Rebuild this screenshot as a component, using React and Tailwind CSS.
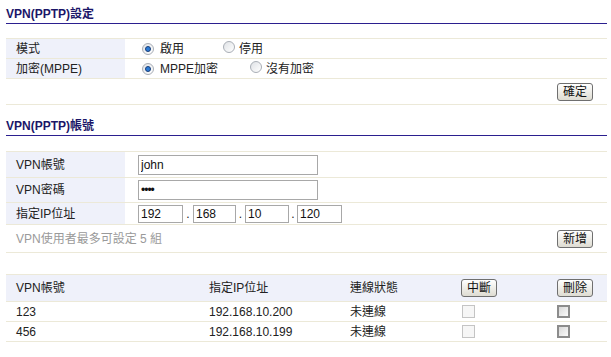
import React from "react";

// VPN (PPTP) settings page

const Title = ({ children, className = "" }) => (
  <div
    className={`pb-[1px] leading-[16px] text-[12px] font-bold text-[#1b1668] border-b border-[#2b1f8f] ${className}`}
  >
    {children}
  </div>
);

const Radio = ({ checked }) => (
  <span className="inline-flex items-center justify-center w-[12px] h-[12px] rounded-full border border-[#a9aeb6] bg-gradient-to-br from-[#dfe2e6] to-[#ffffff]">
    {checked && (
      <span className="w-[6px] h-[6px] rounded-full bg-[#2b7bd6] border border-[#1b3f78]" />
    )}
  </span>
);

const Btn = ({ children }) => (
  <button className="h-[18px] w-[36px] rounded-[3px] border border-[#6f6f6f] bg-gradient-to-b from-[#ffffff] to-[#dedcd2] text-[12px] leading-[14px] text-[#111]">
    {children}
  </button>
);

const Box = ({ disabled }) =>
  disabled ? (
    <span className="block w-[13px] h-[13px] border border-[#c4c4c4] bg-[#f6f6f6]" />
  ) : (
    <span className="block w-[13px] h-[13px] border-2 border-[#8c8c8c] bg-gradient-to-br from-[#d8d8d8] to-[#fbfbfb]" />
  );

const Label = ({ children }) => (
  <div className="w-[119px] self-stretch bg-[#eff1fa] pl-[10px] flex items-center">
    {children}
  </div>
);

const Field = ({ value, className = "" }) => (
  <input
    readOnly
    value={value}
    className={`border border-[#a8a8a8] bg-white px-[2px] text-[12px] text-[#111] outline-none ${className}`}
  />
);

const accounts = [
  { name: "123", ip: "192.168.10.200", status: "未連線" },
  { name: "456", ip: "192.168.10.199", status: "未連線" },
];

export default function App() {
  return (
    <div
      className="w-[611px] h-[357px] bg-white pl-[6px] pr-[4px] text-[12px] text-[#222]"
      style={{ fontFamily: '"Liberation Sans", "Noto Sans CJK TC", sans-serif' }}
    >
      {/* 設定 */}
      <Title className="pt-[6px]">VPN(PPTP)設定</Title>

      <div className="mt-[14px] border-t border-[#ece9d8]">
        <div className="flex items-center h-[20px] border-b border-[#ece9d8]">
          <Label>模式</Label>
          <div className="flex items-center pl-[17px]">
            <Radio checked />
            <span className="ml-[6px]">啟用</span>
            <span className="ml-[39px]"><Radio /></span>
            <span className="ml-[4px]">停用</span>
          </div>
        </div>
        <div className="flex items-center h-[20px] border-b border-[#ece9d8]">
          <Label>加密(MPPE)</Label>
          <div className="flex items-center pl-[17px]">
            <Radio checked />
            <span className="ml-[6px]">MPPE加密</span>
            <span className="ml-[32px]"><Radio /></span>
            <span className="ml-[4px]">沒有加密</span>
          </div>
        </div>
        <div className="flex items-center justify-end h-[26px] border-b border-[#ece9d8] pr-[14px]">
          <Btn>確定</Btn>
        </div>
      </div>

      {/* 帳號 */}
      <Title className="mt-[13px]">VPN(PPTP)帳號</Title>

      <div className="mt-[15px] border-t border-[#ece9d8]">
        <div className="flex items-center h-[26px] border-b border-[#ece9d8]">
          <Label>VPN帳號</Label>
          <div className="pl-[13px]">
            <Field value="john" className="w-[180px] h-[20px]" />
          </div>
        </div>
        <div className="flex items-center h-[25px] border-b border-[#ece9d8]">
          <Label>VPN密碼</Label>
          <div className="pl-[13px]">
            <Field value="••••" className="w-[180px] h-[20px] text-[9px] tracking-[-1px]" />
          </div>
        </div>
        <div className="flex items-center h-[22px] border-b border-[#ece9d8]">
          <Label>指定IP位址</Label>
          <div className="flex items-center pl-[13px]">
            <Field value="192" className="w-[45px] h-[18px]" />
            <span className="w-[10px] text-center">.</span>
            <Field value="168" className="w-[43px] h-[18px]" />
            <span className="w-[9px] text-center">.</span>
            <Field value="10" className="w-[44px] h-[18px]" />
            <span className="w-[8px] text-center">.</span>
            <Field value="120" className="w-[45px] h-[18px]" />
          </div>
        </div>
        <div className="flex items-center justify-between h-[28px] border-b border-[#ece9d8] pl-[10px] pr-[14px]">
          <span className="text-[#9a9a9a]">VPN使用者最多可設定 5 組</span>
          <Btn>新增</Btn>
        </div>
      </div>

      {/* 列表 */}
      <div className="mt-[21px] border-t border-[#ece9d8]">
        <div className="grid grid-cols-[193px_141px_111px_96px_60px] items-center h-[27px] bg-[#eff1fa] border-b border-[#ece9d8]">
          <span className="pl-[10px]">VPN帳號</span>
          <span className="pl-[10px]">指定IP位址</span>
          <span className="pl-[10px]">連線狀態</span>
          <span className="pl-[10px]"><Btn>中斷</Btn></span>
          <span className="pl-[10px]"><Btn>刪除</Btn></span>
        </div>
        {accounts.map((a) => (
          <div
            key={a.name}
            className="grid grid-cols-[193px_141px_111px_96px_60px] items-center h-[20px] border-b border-[#ece9d8]"
          >
            <span className="pl-[10px]">{a.name}</span>
            <span className="pl-[10px]">{a.ip}</span>
            <span className="pl-[10px]">{a.status}</span>
            <span className="pl-[11px]"><Box disabled /></span>
            <span className="pl-[10px]"><Box /></span>
          </div>
        ))}
      </div>
    </div>
  );
}
